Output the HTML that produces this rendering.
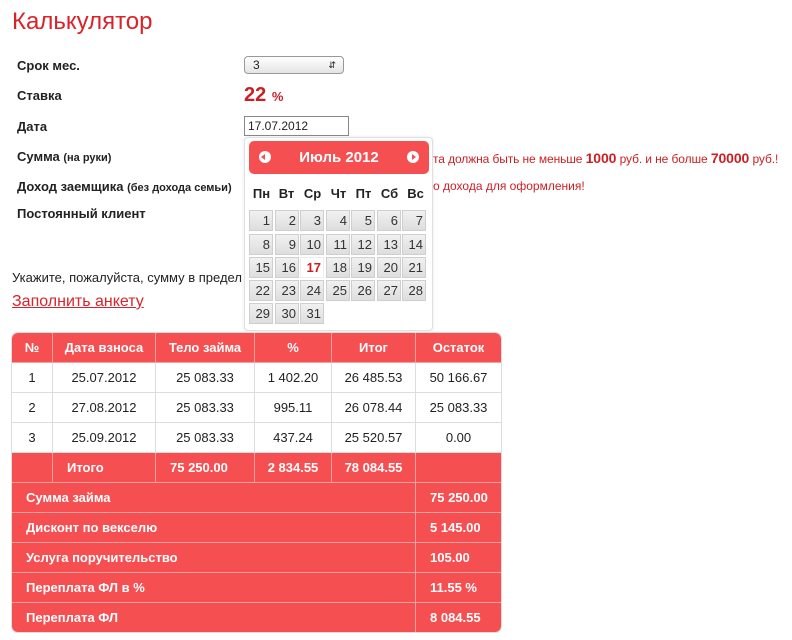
<!DOCTYPE html>
<html><head><meta charset="utf-8"><style>
body{margin:0;background:#fff;font-family:"Liberation Sans","DejaVu Sans",sans-serif;width:792px;height:640px;position:relative;overflow:hidden;color:#222}
.a{position:absolute;white-space:nowrap}
h1{position:absolute;left:12px;top:8px;margin:0;font-size:24px;font-weight:normal;color:#d9232a}
.lbl{position:absolute;left:17px;font-size:13px;font-weight:bold;color:#222}
.lbl small{font-size:11px}
.red{color:#cc1f24}
.cal{position:absolute;left:244px;top:137px;width:187px;height:192px;background:#fff;border:1px solid #e0e0e0;border-radius:4px;box-shadow:0 0 3px rgba(0,0,0,.1)}
.ch{position:absolute;left:4px;top:3px;width:180px;height:33px;background:#f54f52;border-radius:5px;color:#fff;font-weight:bold;font-size:15px;text-align:center;line-height:33px}
.arr{position:absolute;top:10px;width:12px;height:12px;border-radius:50%;background:#fff}
.dn{position:absolute;top:48px;font-size:13px;font-weight:bold;width:25px;text-align:center}
.d{position:absolute;width:20px;height:19px;background:linear-gradient(#f1f1f1,#dedede);border:1px solid #cfcfcf;font-size:13px;text-align:right;padding-right:2px;line-height:19px;color:#333;box-sizing:content-box}
table{position:absolute;left:12px;top:333px;width:489px;border-collapse:separate;border-spacing:0;border-radius:6px;overflow:hidden;font-size:13px;box-shadow:0 0 0 1px #ddd}
td{height:29px;border-right:1px solid #ddd;border-bottom:1px solid #ddd;text-align:center;padding:0}
td:last-child{border-right:none}
tr.r td{background:#f54f52;color:#fff;font-weight:bold;border-color:#f7a0a0}
tr.r td.l{text-align:left;padding-left:14px}
tr.w td{background:#fff;color:#222}
tr:last-child td{border-bottom:none}
</style></head><body>
<h1>Калькулятор</h1>
<div class="lbl" style="top:58px">Срок мес.</div>
<div class="lbl" style="top:88px">Ставка</div>
<div class="lbl" style="top:119px">Дата</div>
<div class="lbl" style="top:149px">Сумма <small>(на руки)</small></div>
<div class="lbl" style="top:179px">Доход заемщика <small>(без дохода семьи)</small></div>
<div class="lbl" style="top:206px">Постоянный клиент</div>
<div class="a" style="left:244px;top:56px;width:98px;height:16px;border:1px solid #999;border-radius:4px;background:linear-gradient(#fff,#e4e4e4);font-size:12px;line-height:16px"><span style="margin-left:8px">3</span><span style="position:absolute;right:7px;top:0;font-size:9px">&#8693;</span></div>
<div class="a red" style="left:244px;top:84px;font-size:20px;font-weight:bold">22 <span style="font-size:13px">%</span></div>
<div class="a" style="left:244px;top:116px;width:100px;height:18px;border:1px solid #888;font-size:12px;line-height:18px;padding-left:3px">17.07.2012</div>
<div class="a red" style="left:433px;top:150px;font-size:12px;letter-spacing:-0.1px">та должна быть не меньше <b style="font-size:14px">1000</b> руб. и не болше <b style="font-size:14px">70000</b> руб.!</div>
<div class="a red" style="left:433px;top:179px;font-size:12px">о дохода для оформления!</div>
<div class="a" style="left:12px;top:270px;font-size:13px">Укажите, пожалуйста, сумму в предел</div>
<div class="a red" style="left:12px;top:293px;font-size:16px;text-decoration:underline;color:#d9232a">Заполнить анкету</div>
<div class="cal">
<div class="ch">Июль 2012
<div class="arr" style="left:10px"><span style="position:absolute;left:2px;top:3px;border:3px solid transparent;border-right:4px solid #f54f52;border-left:0"></span></div>
<div class="arr" style="right:10px"><span style="position:absolute;left:5px;top:3px;border:3px solid transparent;border-left:4px solid #f54f52;border-right:0"></span></div>
</div>
<div class="dn" style="left:4px">Пн</div><div class="dn" style="left:29px">Вт</div><div class="dn" style="left:55px">Ср</div><div class="dn" style="left:81px">Чт</div><div class="dn" style="left:106px">Пт</div><div class="dn" style="left:132px">Сб</div><div class="dn" style="left:158px">Вс</div>
<div id="days"></div>
</div>
<script>
var h='',xs=[4,30,55,81,106,132,157],ys=[72,96,119,142,165];
for(var i=1;i<=31;i++){var c=(i-1)%7,r=Math.floor((i-1)/7);
var st=i==17?'background:#fff;border-color:#eee;color:#cc1f24;font-weight:bold;':'';
h+='<div class="d" style="left:'+xs[c]+'px;top:'+ys[r]+'px;'+st+'">'+i+'</div>';}
document.getElementById('days').innerHTML=h;
</script>
<table>
<colgroup><col style="width:41px"><col style="width:103px"><col style="width:99px"><col style="width:77px"><col style="width:84px"><col></colgroup>
<tr class="r"><td>№</td><td>Дата взноса</td><td>Тело займа</td><td>%</td><td>Итог</td><td>Остаток</td></tr>
<tr class="w"><td>1</td><td>25.07.2012</td><td>25 083.33</td><td>1 402.20</td><td>26 485.53</td><td>50 166.67</td></tr>
<tr class="w"><td>2</td><td>27.08.2012</td><td>25 083.33</td><td>995.11</td><td>26 078.44</td><td>25 083.33</td></tr>
<tr class="w"><td>3</td><td>25.09.2012</td><td>25 083.33</td><td>437.24</td><td>25 520.57</td><td>0.00</td></tr>
<tr class="r"><td></td><td class="l">Итого</td><td class="l">75 250.00</td><td>2 834.55</td><td>78 084.55</td><td></td></tr>
<tr class="r"><td class="l" colspan="5">Сумма займа</td><td class="l">75 250.00</td></tr>
<tr class="r"><td class="l" colspan="5">Дисконт по векселю</td><td class="l">5 145.00</td></tr>
<tr class="r"><td class="l" colspan="5">Услуга поручительство</td><td class="l">105.00</td></tr>
<tr class="r"><td class="l" colspan="5">Переплата ФЛ в %</td><td class="l">11.55 %</td></tr>
<tr class="r"><td class="l" colspan="5">Переплата ФЛ</td><td class="l">8 084.55</td></tr>
</table>
</body></html>
